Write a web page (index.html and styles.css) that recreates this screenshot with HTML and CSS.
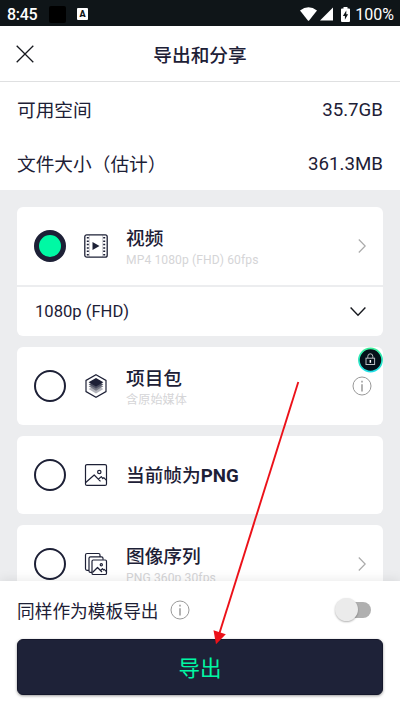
FILE: index.html
```html
<!DOCTYPE html>
<html lang="zh-CN">
<head>
<meta charset="utf-8">
<meta name="viewport" content="width=device-width, initial-scale=1">
<title>导出和分享</title>
<link rel="stylesheet" href="styles.css">
</head>
<body>
<div class="screen">
  <div class="status">
    <span class="clock">8:45</span>
    <span class="blank"></span>
    <span class="badge-a">A</span>
    <svg class="wifi" width="17" height="15" viewBox="0 0 17 15"><path d="M0 3.500Q8.500-2.800 17 3.500L9.300 13.200Q8.500 14.200 7.700 13.200Z" fill="#fff"/></svg>
    <svg class="signal" width="13" height="14" viewBox="0 0 13 14"><path d="M13 0.500V13.500H0Z" fill="#fff"/></svg>
    <svg class="battery" width="9" height="15" viewBox="0 0 9 15"><path d="M2.500 0h4v1.500h1.500q1 0 1 1V14q0 1-1 1H1q-1 0-1-1V2.500q0-1 1-1h1.500Z" fill="#fff"/><path d="M5.300 3.500 1.900 9h2v3.800L7.100 7.300h-1.800Z" fill="#0f1518"/></svg>
    <span class="percent">100%</span>
  </div>
  <header class="header">
    <svg class="close" width="18" height="18" viewBox="0 0 18 18"><path d="M.7.700 17.300 17.300M17.300.700.700 17.300" stroke="#16181e" stroke-width="1.300" fill="none"/></svg>
    <h1>导出和分享</h1>
  </header>
  <section class="info">
    <div class="info-row"><span>可用空间</span><span class="value">35.7GB</span></div>
    <div class="info-row"><span>文件大小（估计）</span><span class="value">361.3MB</span></div>
  </section>
  <main class="list">
    <div class="card">
      <div class="option">
        <span class="radio checked"></span>
        <svg class="icon" width="24" height="24" viewBox="0 0 24 24" fill="none" stroke="#1d2036"><rect x=".8" y=".8" width="22.400" height="22.400" rx="2" stroke-width="1.300"/><path d="M3.800 3v18.500M20.200 3v18.500" stroke-width="2" stroke-dasharray="1.500 1.900"/><path d="M5.400 1v22M18.600 1v22" stroke-width=".4" opacity=".5"/><path d="M8.500 8v8l7-4Z" fill="#1d2036" stroke="none"/></svg>
        <div class="label"><b>视频</b><small>MP4 1080p (FHD) 60fps</small></div>
        <svg class="chev" width="8" height="14" viewBox="0 0 8 14"><path d="M.8.500 7.200 7 .8 13.500" fill="none" stroke="#aaa" stroke-width="1.200"/></svg>
      </div>
      <div class="resolution"><span>1080p (FHD)</span><svg width="16" height="10" viewBox="0 0 16 10"><path d="M.6 .5 8 8.200 15.400 .5" fill="none" stroke="#16181e" stroke-width="1.400"/></svg></div>
    </div>
    <div class="card">
      <div class="option">
        <span class="radio"></span>
        <svg class="icon" width="24" height="24" viewBox="0 0 24 24"><path d="M12 .8 22 6.400V17.600L12 23.200 2 17.600V6.400Z" fill="#fff" stroke="#1d2036" stroke-width="1.200"/><path d="M4.600 15 12 11l7.400 4L12 19.500Z" fill="#b4b5bc"/><path d="M4.600 12.300 12 9l7.400 3.300L12 16.800Z" fill="#777985"/><path d="M4.600 10.300 12 7l7.400 3.300L12 14.600Z" fill="#4b4e60"/><path d="M4.600 8.300 12 4l7.400 4.300L12 12.600Z" fill="#1d2036"/></svg>
        <div class="label"><b>项目包</b><small>含原始媒体</small></div>
        <svg class="about" width="20" height="20" viewBox="0 0 20 20" fill="none" stroke="#999"><circle cx="10" cy="10" r="9"/><path d="M10 8.200V15.500M10 4.700V6.500" stroke-width="1.500"/></svg>
      </div>
      <svg class="lock" width="26" height="26" viewBox="0 0 26 26"><defs><linearGradient id="ring" x1="0" y1="0" x2="0" y2="1"><stop offset="0" stop-color="#3df09c"/><stop offset="1" stop-color="#20dfe6"/></linearGradient></defs><circle cx="13.500" cy="13" r="11.600" fill="#05101a" stroke="url(#ring)" stroke-width="1.700"/><g fill="none" stroke="#b9bec2" stroke-width="1"><rect x="9" y="11.200" width="8.600" height="6.300"/><path d="M10.800 11V9.300a2.500 2.500 0 0 1 5 0V11"/></g><path d="M12.600 13h1.500v2.800h-1.500Z" fill="#fff"/></svg>
    </div>
    <div class="card">
      <div class="option">
        <span class="radio"></span>
        <svg class="icon" width="24" height="24" viewBox="0 0 24 24" fill="none" stroke="#1d2036" stroke-width="1.200"><rect x="1.500" y="1.600" width="21" height="20.800" rx="1.500"/><circle cx="15.300" cy="9" r="1.700"/><path d="M1.700 19.500 10.200 12l6.300 6.300M14.300 16.200l3-2.600 1.500 2 1-1 2.700 2.800" stroke-linejoin="round"/></svg>
        <div class="label"><b>当前帧为<span class="latin">PNG</span></b></div>
      </div>
    </div>
    <div class="card">
      <div class="option">
        <span class="radio"></span>
        <svg class="icon" width="24" height="24" viewBox="0 0 24 24" fill="none" stroke="#1d2036" stroke-width="1.200"><path d="M5 18.300H3q-1.500 0-1.500-1.500V3Q1.500 1.500 3 1.500H14.500Q16 1.500 16 3v1.500M8 20.400H6.500Q5 20.400 5 18.900V6.300Q5 4.800 6.500 4.800H17.500Q19 4.800 19 6.300v1.500"/><rect x="8" y="8" width="14.500" height="14.500" rx="1.300"/><circle cx="17.300" cy="12.800" r="1.100"/><path d="M8.500 20.500 13.500 15.500l4.500 4.500M16.500 18.500l2-1.800 1 1.300.7-.6 2 2" stroke-linejoin="round"/></svg>
        <div class="label"><b>图像序列</b><small>PNG 360p 30fps</small></div>
        <svg class="chev" width="8" height="14" viewBox="0 0 8 14"><path d="M.8.500 7.200 7 .8 13.500" fill="none" stroke="#aaa" stroke-width="1.200"/></svg>
      </div>
    </div>
  </main>
  <footer class="footer">
    <div class="template">
      <span>同样作为模板导出</span>
      <svg width="20" height="20" viewBox="0 0 20 20" fill="none" stroke="#999"><circle cx="10" cy="10" r="9"/><path d="M10 8.200V15.500M10 4.700V6.500" stroke-width="1.500"/></svg>
      <span class="switch"><i></i></span>
    </div>
    <button class="export">导出</button>
  </footer>
  <svg class="arrow" width="400" height="711" viewBox="0 0 400 711"><path d="M298.300 382 219.500 633" stroke="#ec1119" stroke-width="1.900"/><path d="M213.500 630.200 225.800 634.200 216 644.200Z" fill="#ec1119"/></svg>
</div>
</body>
</html>
```
FILE: styles.css
```css
* { box-sizing: border-box; }
body { margin: 0; font-family: Roboto, "Noto Sans CJK SC", sans-serif; color: #1d2036; }
svg { display: block; flex: none; }
.screen { position: relative; width: 400px; height: 711px; overflow: hidden; background: #fff; display: flex; flex-direction: column; }
.status { height: 26px; flex: none; background: #0f1518; color: #fff; display: flex; align-items: center; padding: 2px 7px 0; }
.clock { width: 31px; font-size: 16px; font-weight: 500; letter-spacing: -.3px; }
.blank { width: 17px; height: 17px; margin-left: 11px; background: #000; border-radius: 2px; }
.badge-a { width: 11px; height: 12px; margin-left: 11px; background: #fff; color: #0f1518; border-radius: 1px; font-size: 9px; font-weight: 900; line-height: 12px; text-align: center; }
.wifi { margin-left: auto; }
.signal { margin-left: 3px; }
.battery { margin-left: 8px; }
.percent { margin-left: 5px; margin-right: -1px; font-size: 16px; letter-spacing: 0; }
.header { height: 56px; flex: none; display: flex; align-items: center; justify-content: center; border-bottom: 1px solid #dfe0e1; position: relative; }
.close { position: absolute; left: 16px; top: 19px; }
h1 { margin: 0; font-size: 18.7px; font-weight: 500; }
.info { height: 108px; flex: none; font-size: 18.7px; }
.info-row { height: 54px; padding: 0 17px; display: flex; align-items: center; justify-content: space-between; }
.info-row span:first-child { padding-bottom: 1px; }
.value { padding-top: 2px; }
.list { height: 391px; flex: none; overflow: hidden; padding: 17px 17px 0; background: #ecedef; display: flex; flex-direction: column; gap: 11px; }
.card { flex: none; background: #fff; border-radius: 6px; position: relative; }
.option { height: 78px; display: flex; align-items: center; padding: 0 17px; }
.radio { width: 32px; height: 32px; flex: none; border: 2px solid #1d2036; border-radius: 50%; }
.radio.checked { border-width: 5px; background: #00f9a4; }
.icon { margin-left: 17.5px; }
.label { flex: 1; margin-left: 18.5px; padding-top: 2px; display: flex; flex-direction: column; white-space: nowrap; }
.label b { font-size: 18.7px; line-height: 25px; font-weight: 500; }
.label .latin { font-weight: 700; }
.label small { font-size: 12.1px; line-height: 16px; color: #d5d5d7; letter-spacing: .1px; }
.about { margin-right: -6px; }
.resolution { height: 51px; border-top: 2px solid #ecedef; padding: 0 17px 0 18px; display: flex; align-items: center; justify-content: space-between; font-size: 16.6px; }
.lock { position: absolute; right: 0; top: 0; }
.footer { flex: 1; position: relative; background: #fff; padding: 0 17px; box-shadow: 0 -2px 10px rgba(0, 0, 0, .08); }
.template { height: 58px; display: flex; align-items: center; font-size: 17.7px; }
.template svg { margin-left: 11px; }
.switch { width: 34px; height: 16px; margin: 0 12px 0 auto; border-radius: 8px; background: #b0b0b0; position: relative; }
.switch i { position: absolute; left: -2px; top: -4px; width: 23px; height: 23px; border-radius: 50%; background: #ebebeb; box-shadow: 0 1px 2px rgba(0, 0, 0, .3); }
.export { width: 100%; height: 56px; border: 1px solid #14172b; border-radius: 6px; background: #1e2238; color: #00f9a4; font: 400 21.5px Roboto, "Noto Sans CJK SC", sans-serif; box-shadow: 0 1px 3px rgba(0, 0, 0, .4); display: flex; align-items: center; justify-content: center; padding: 0 0 2px; }
.arrow { position: absolute; left: 0; top: 0; pointer-events: none; }
```
